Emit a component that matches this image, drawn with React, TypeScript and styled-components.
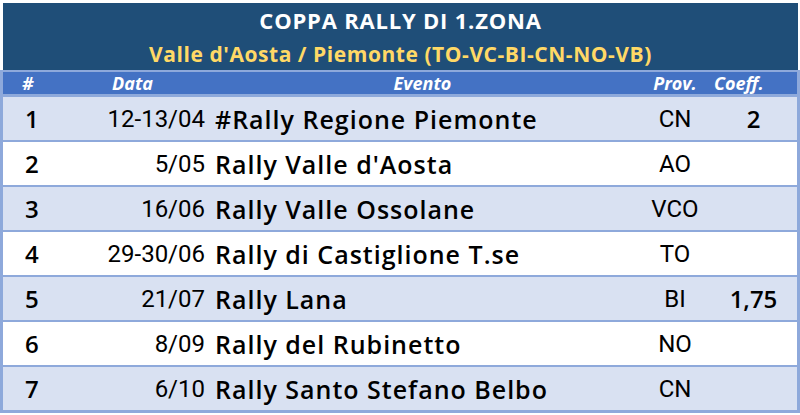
import React from 'react';
import styled, { createGlobalStyle } from 'styled-components';

type Race = {
  n: number;
  date: string;
  name: string;
  prov: string;
  coeff?: string;
};

const races: Race[] = [
  { n: 1, date: '12-13/04', name: '#Rally Regione Piemonte', prov: 'CN', coeff: '2' },
  { n: 2, date: '5/05', name: "Rally Valle d'Aosta", prov: 'AO' },
  { n: 3, date: '16/06', name: 'Rally Valle Ossolane', prov: 'VCO' },
  { n: 4, date: '29-30/06', name: 'Rally di Castiglione T.se', prov: 'TO' },
  { n: 5, date: '21/07', name: 'Rally Lana', prov: 'BI', coeff: '1,75' },
  { n: 6, date: '8/09', name: 'Rally del Rubinetto', prov: 'NO' },
  { n: 7, date: '6/10', name: 'Rally Santo Stefano Belbo', prov: 'CN' },
];

const COLS = '57px 145px 435px 70px 1fr';

export default function App() {
  return (
    <>
      <GlobalStyle />
      <Page>
        <TitleBand>
          <Title>COPPA RALLY DI 1.ZONA</Title>
          <Subtitle>Valle d'Aosta / Piemonte (TO-VC-BI-CN-NO-VB)</Subtitle>
        </TitleBand>
        <Table>
          <HeadRow>
            <HeadCell $pad="0 0 0 19px">#</HeadCell>
            <HeadCell $align="center">Data</HeadCell>
            <HeadCell $align="center">Evento</HeadCell>
            <HeadCell $align="center">Prov.</HeadCell>
            <HeadCell $pad="0 0 0 4px">Coeff.</HeadCell>
          </HeadRow>
          {races.map((r) => (
            <Row key={r.n} $alt={r.n % 2 === 1}>
              <Num>{r.n}</Num>
              <DateCell>{r.date}</DateCell>
              <EventCell>{r.name}</EventCell>
              <ProvCell>{r.prov}</ProvCell>
              <CoeffCell>{r.coeff ?? ''}</CoeffCell>
            </Row>
          ))}
        </Table>
      </Page>
    </>
  );
}

const GlobalStyle = createGlobalStyle`
  body {
    margin: 0;
    background: #ffffff;
    font-family: Roboto, "Liberation Sans", sans-serif;
  }
`;

const Page = styled.main`
  width: 800px;
  height: 415px;
  padding-top: 3px;
  box-sizing: border-box;
  overflow: hidden;
`;

const TitleBand = styled.header`
  margin: 0 2px 0 3px;
  height: 67px;
  background: #1f4e78;
  display: flex;
  flex-direction: column;
  align-items: center;
  justify-content: center;
  gap: 9px;
  padding-top: 1px;
  box-sizing: border-box;
`;

const Title = styled.h1`
  margin: 0;
  color: #ffffff;
  font-family: "Open Sans", Roboto, sans-serif;
  font-size: 22px;
  font-weight: 700;
  line-height: 25px;
  letter-spacing: 0.8px;
`;

const Subtitle = styled.h2`
  margin: 0;
  color: #ffd966;
  font-family: "Open Sans", Roboto, sans-serif;
  font-size: 21px;
  font-weight: 700;
  line-height: 25px;
  letter-spacing: 0.55px;
`;

const Table = styled.section`
  border: 3px solid #8ea9db;
  border-top-width: 2px;
`;

const HeadRow = styled.div`
  display: grid;
  grid-template-columns: ${COLS};
  height: 22px;
  background: #4472c4;
  border-bottom: 3px solid #8ea9db;
  align-items: center;
`;

const HeadCell = styled.div<{ $align?: string; $pad?: string }>`
  color: #ffffff;
  font-family: "Open Sans", Roboto, sans-serif;
  font-size: 18px;
  font-weight: 700;
  font-style: italic;
  text-align: ${(p) => p.$align ?? 'left'};
  padding: ${(p) => p.$pad ?? '0'};
  line-height: 22px;
`;

const Row = styled.div<{ $alt: boolean }>`
  display: grid;
  grid-template-columns: ${COLS};
  height: 43px;
  align-items: center;
  background: ${(p) => (p.$alt ? '#d9e1f2' : '#ffffff')};
  color: #000000;
  font-size: 24px;
  & + & {
    border-top: 2px solid #8ea9db;
  }
`;

const Num = styled.div`
  padding-left: 22px;
  font-family: "Open Sans", Roboto, sans-serif;
  font-weight: 600;
`;

const DateCell = styled.div`
  text-align: right;
`;

const EventCell = styled.div`
  padding-left: 10px;
  font-family: "Open Sans", Roboto, sans-serif;
  font-weight: 600;
  font-size: 25px;
  letter-spacing: 1px;
  white-space: nowrap;
`;

const ProvCell = styled.div`
  text-align: center;
`;

const CoeffCell = styled.div`
  text-align: center;
  font-family: "Open Sans", Roboto, sans-serif;
  font-weight: 600;
`;
